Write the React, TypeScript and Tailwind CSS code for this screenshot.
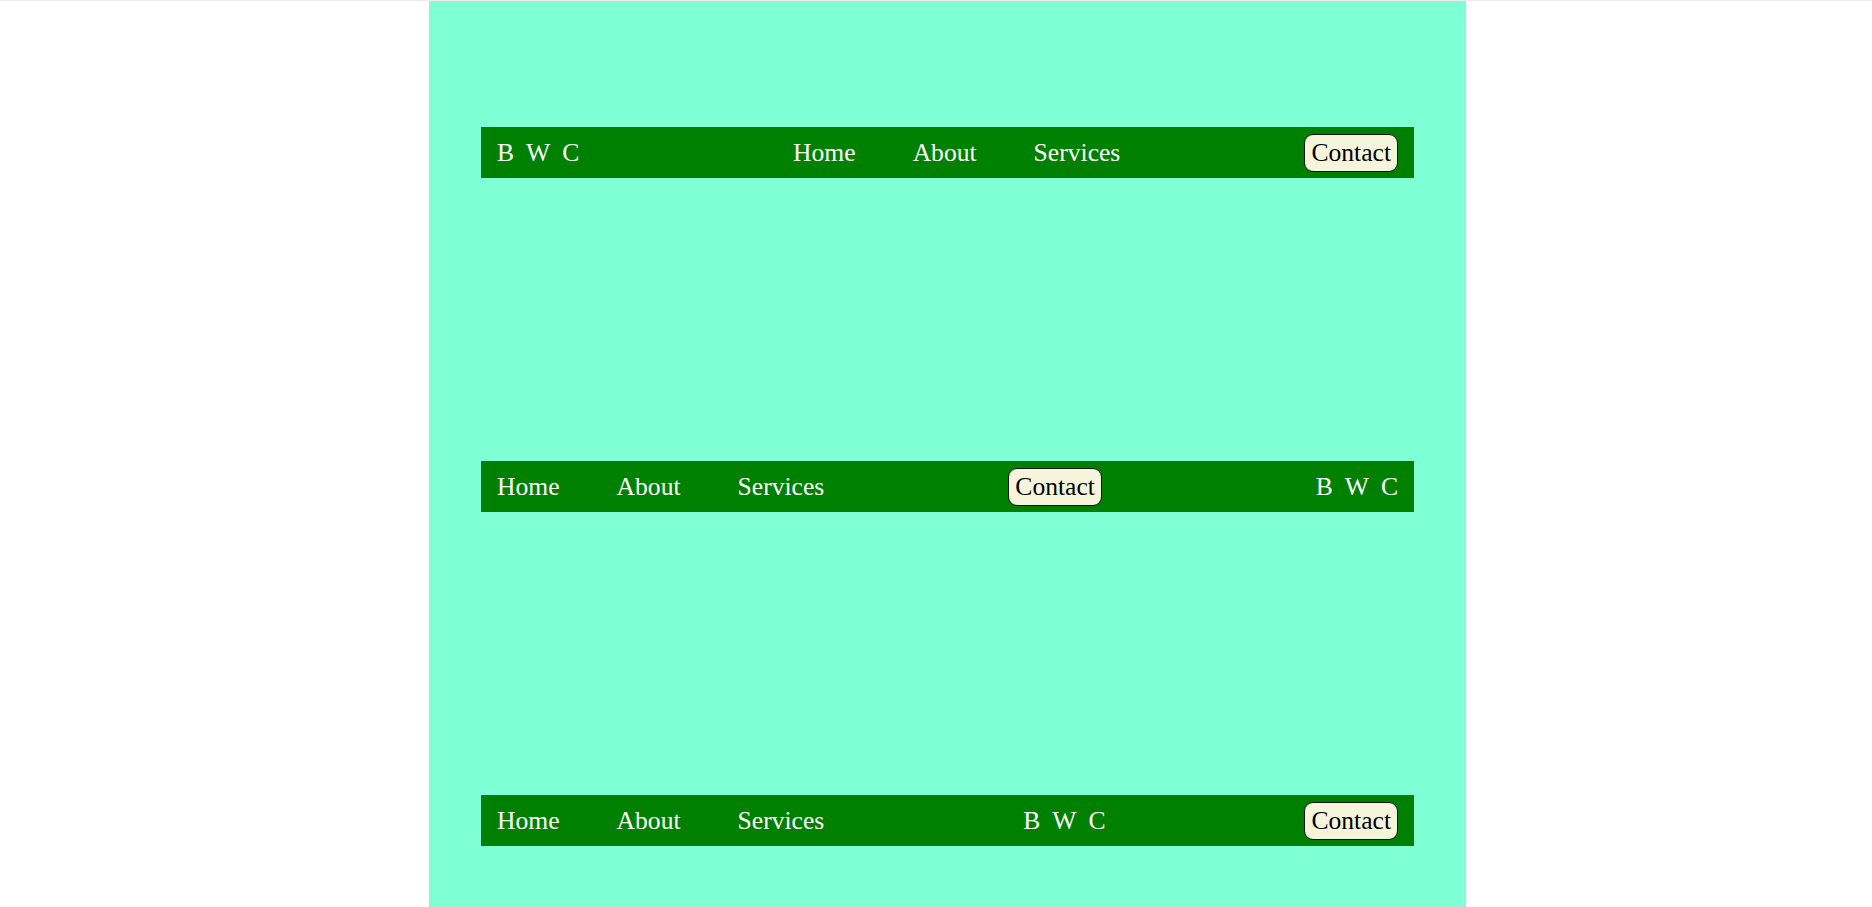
const links = ['Home', 'About', 'Services']

function Logo({ align }: { align: 'left' | 'right' | 'center' }) {
  const alignClass =
    align === 'left' ? 'justify-start' : align === 'right' ? 'justify-end' : 'justify-center'
  return (
    <div className={`flex w-[112px] translate-y-px gap-[12px] text-white ${alignClass}`}>
      <span>B</span>
      <span>W</span>
      <span>C</span>
    </div>
  )
}

function Links() {
  return (
    <ul className="flex translate-y-px gap-[57px] text-white">
      {links.map((link) => (
        <li key={link}>
          <a href="#">{link}</a>
        </li>
      ))}
    </ul>
  )
}

function ContactButton() {
  return (
    <button className="flex h-[38px] items-center rounded-[9px] border border-[#111] bg-[#f5f5dc] px-[6px] leading-none text-black">
      Contact
    </button>
  )
}

function Nav({ children }: { children: React.ReactNode }) {
  return (
    <nav className="flex h-[51px] items-center justify-between bg-[#008000] px-4">
      {children}
    </nav>
  )
}

export default function App() {
  return (
    <div className="min-h-screen bg-white font-['Liberation_Serif',serif] text-[25.6px]">
      <div className="h-px bg-[#ececec]" />
      <div className="ml-[429px] flex w-[1037px] flex-col gap-[283px] bg-[#7fffd4] px-[52px] pt-[126px] pb-[126px]">
        <Nav>
          <Logo align="left" />
          <Links />
          <ContactButton />
        </Nav>
        <Nav>
          <Links />
          <ContactButton />
          <Logo align="right" />
        </Nav>
        <Nav>
          <Links />
          <Logo align="center" />
          <ContactButton />
        </Nav>
      </div>
    </div>
  )
}
